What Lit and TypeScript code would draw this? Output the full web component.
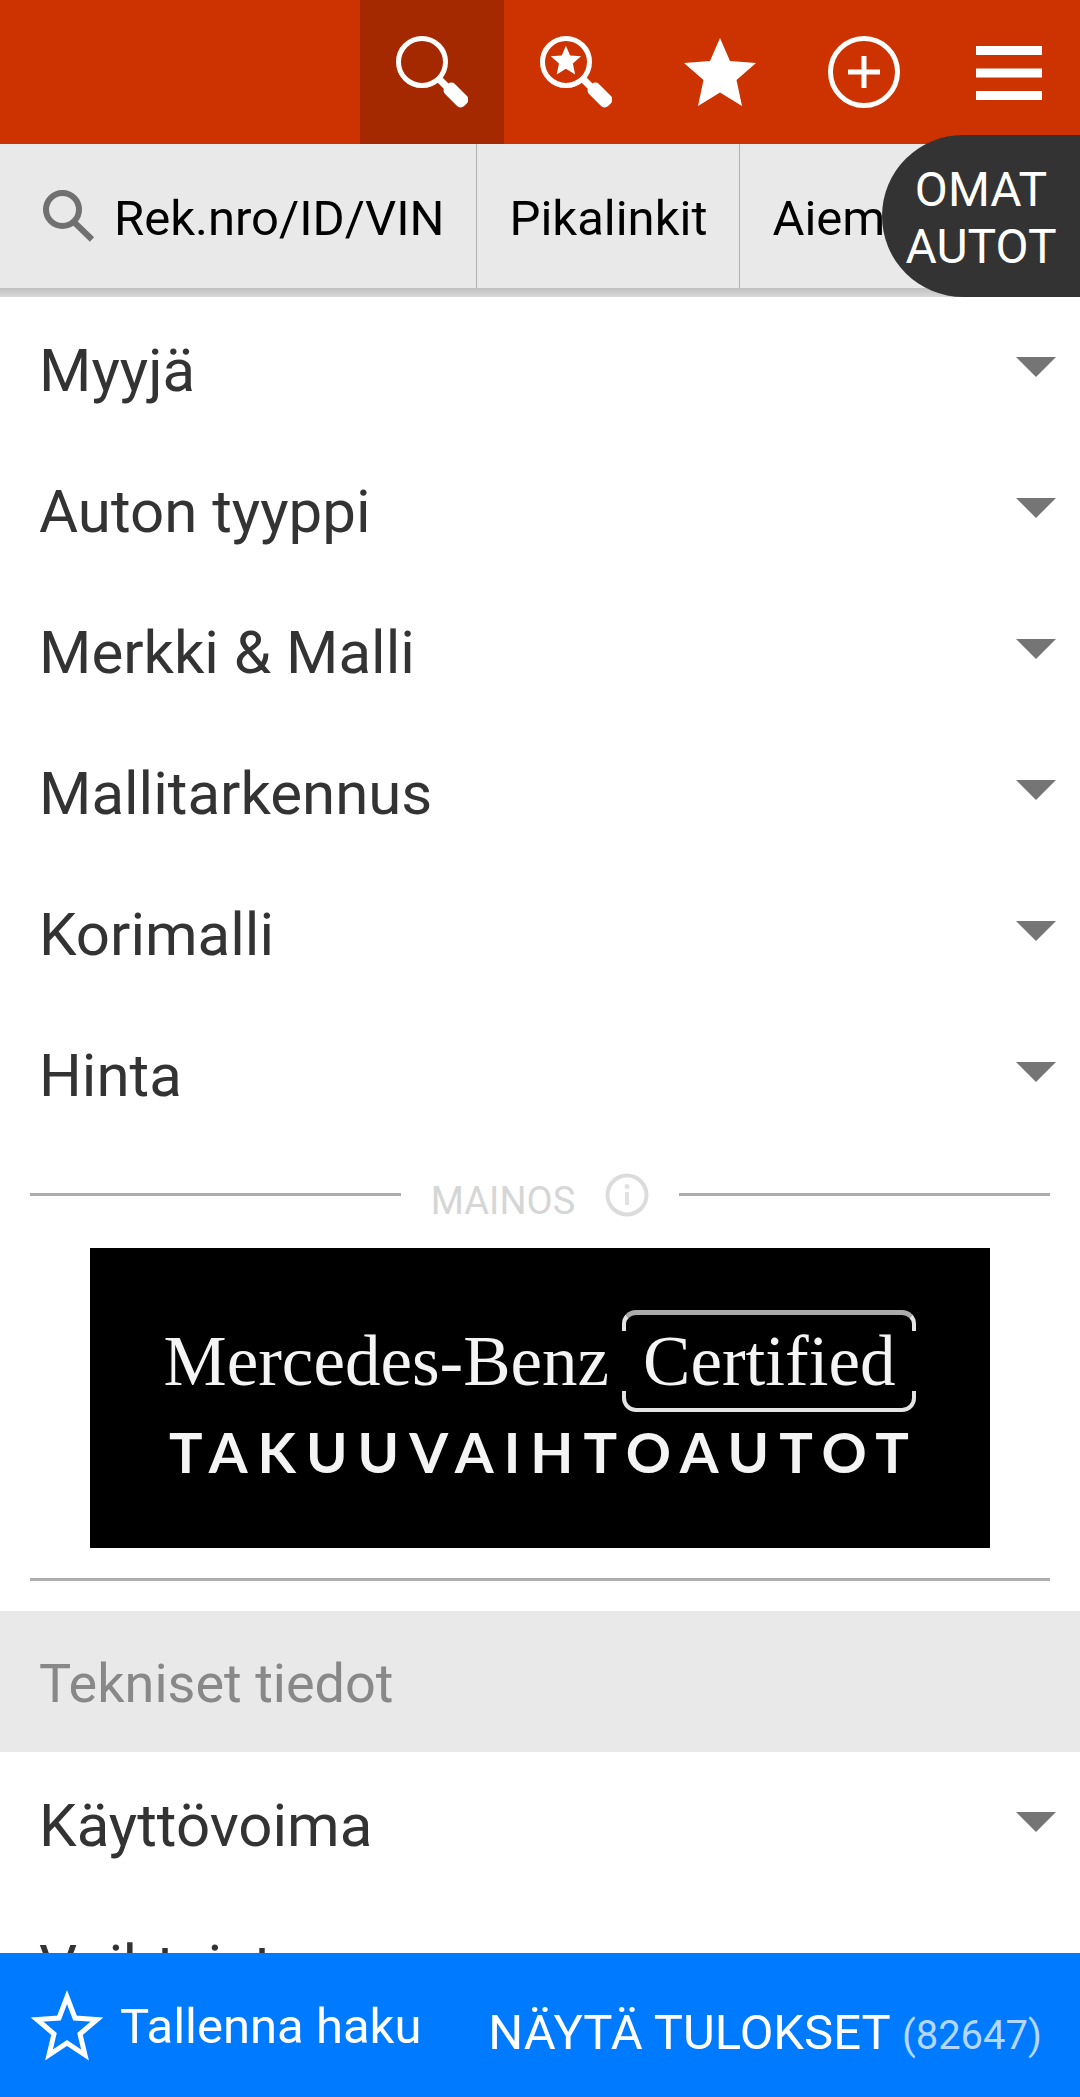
import { LitElement, html, css, svg } from "lit";
import { customElement, property, state } from "lit/decorators.js";

const STAR = "M36 2 L46 25 L72 27 L52.5 44 L58 70 L36 56.5 L14 70 L19.5 44 L0 27 L26 25 Z";

const lens = svg`
  <circle cx="26" cy="26" r="23.5" fill="none" stroke="#fff" stroke-width="5"/>
  <path d="M42 42 L52 52" stroke="#fff" stroke-width="7"/>
  <rect x="46.5" y="52" width="27" height="14" rx="5" fill="#fff" transform="rotate(45 60 59)"/>`;

const icons = {
  search: html`<svg viewBox="0 0 72 72" aria-hidden="true">${lens}</svg>`,
  saved: html`<svg viewBox="0 0 72 72" aria-hidden="true">${lens}
    <path d=${STAR} fill="#fff" transform="translate(10.8 9) scale(0.42)"/></svg>`,
  star: html`<svg viewBox="0 0 72 72" aria-hidden="true"><path d=${STAR} fill="#fff"/></svg>`,
  add: html`<svg viewBox="0 0 72 72" aria-hidden="true">
    <circle cx="36" cy="36" r="33.5" fill="none" stroke="#fff" stroke-width="5"/>
    <path d="M36 20 V52 M20 36 H52" stroke="#fff" stroke-width="5"/></svg>`,
  menu: html`<svg viewBox="0 0 72 72" aria-hidden="true">
    <path d="M4 14.5 H70 M4 37 H70 M4 59.5 H70" stroke="#fff" stroke-width="9"/></svg>`,
};

const NAV = [
  { label: "Haku", icon: icons.search },
  { label: "Tallennetut haut", icon: icons.saved },
  { label: "Suosikit", icon: icons.star },
  { label: "Lisää ilmoitus", icon: icons.add },
  { label: "Valikko", icon: icons.menu },
];

@customElement("filter-row")
export class FilterRow extends LitElement {
  @property() label = "";
  @state() private open = false;

  static styles = css`
    :host { display: block; }
    .row {
      display: flex; align-items: center; justify-content: space-between;
      width: 100%; height: 141px; padding: 0 24px 2px 39px;
      border: 0; background: none; text-align: left; cursor: pointer;
      font: 400 60px/72px Roboto, sans-serif; color: #333;
    }
    .label { padding-top: 8px; }
    .arrow { width: 40px; height: 20px; fill: #757575; }
  `;

  render() {
    return html`<button class="row" aria-expanded=${this.open} @click=${() => (this.open = !this.open)}>
      <span class="label">${this.label}</span>
      <svg class="arrow" viewBox="0 0 40 20" aria-hidden="true"><path d="M0 0 H40 L20 20 Z"/></svg>
    </button>`;
  }
}

@customElement("ad-slot")
export class AdSlot extends LitElement {
  static styles = css`
    :host { display: block; padding: 30px 30px; }
    .head { display: flex; align-items: center; gap: 30px; height: 43px; }
    .line { flex: 1; height: 3px; background: #adadad; }
    .caption { display: flex; align-items: center; gap: 30px; }
    .caption-text { font: 400 38px/42px Roboto, sans-serif; color: #d6d6d6; padding-top: 12px; }
    .info { width: 44px; height: 44px; padding: 0; border: 0; background: none; }
    .info svg { display: block; width: 44px; height: 44px; }
    .banner {
      display: flex; flex-direction: column; align-items: center; justify-content: center;
      aspect-ratio: 3 / 1; margin: 32px 60px 30px; padding-bottom: 4px; box-sizing: border-box;
      background: #000; color: #f4f4f4; text-decoration: none; overflow: hidden;
    }
    .brand { display: flex; align-items: center; gap: 13px; font: 400 71px/60px "Liberation Serif", serif; }
    .certified { display: flex; flex-direction: column; }
    .certified::before, .certified::after {
      content: ""; box-sizing: border-box; height: 21px; border: 4px solid #e4e4e4;
    }
    .certified::before { border-top: 5px solid #ababab; border-bottom: 0; border-radius: 14px 14px 0 0; }
    .certified::after { border-top: 0; border-radius: 0 0 14px 14px; }
    .word { padding: 0 21px; }
    .tagline { font: 700 56px/60px Lato, sans-serif; letter-spacing: 10px; padding: 10px 0 0 8px; }
  `;

  render() {
    return html`
      <div class="head">
        <span class="line"></span>
        <span class="caption">
          <span class="caption-text">MAINOS</span>
          <button class="info" aria-label="Tietoa mainoksesta">
            <svg viewBox="0 0 44 44" aria-hidden="true">
              <circle cx="22" cy="22" r="19.5" fill="none" stroke="#dcdcdc" stroke-width="4"/>
              <path d="M22 19 V32" stroke="#e2e2e2" stroke-width="4"/>
              <circle cx="22" cy="13.5" r="2.5" fill="#e2e2e2"/>
            </svg>
          </button>
        </span>
        <span class="line"></span>
      </div>
      <a class="banner" href="#">
        <span class="brand">
          <span>Mercedes-Benz</span>
          <span class="certified"><span class="word">Certified</span></span>
        </span>
        <span class="tagline">TAKUUVAIHTOAUTOT</span>
      </a>
      <div class="line"></div>
    `;
  }
}

@customElement("app-root")
export class AppRoot extends LitElement {
  @state() private active = 0;

  static styles = css`
    :host {
      display: flex; flex-direction: column; height: 100vh; overflow: hidden;
      background: #fff; font-family: Roboto, sans-serif;
    }
    button { font-family: inherit; border: 0; background: none; padding: 0; cursor: pointer; }
    .nav { display: flex; justify-content: flex-end; flex: none; background: #cc3300; }
    .nav-item { display: flex; align-items: center; justify-content: center; width: 144px; height: 144px; }
    .nav-item.active { background: #a42900; }
    .nav-item svg { width: 72px; height: 72px; }
    .sub { position: relative; flex: none; }
    .tabs { display: flex; height: 144px; background: #e9e9e9; overflow: hidden; }
    .tab {
      display: flex; align-items: center; flex: none; padding: 5px 32px 0; box-sizing: border-box;
      border-right: 1px solid #b0b0b0; color: #000; text-decoration: none;
      font-size: 49px; line-height: 58px; white-space: nowrap;
    }
    .tab.lookup { padding-left: 42px; gap: 18px; }
    .tab svg { width: 54px; height: 54px; margin-bottom: 5px; }
    .shade { height: 9px; background: linear-gradient(#c0c0c0, #d8d8d8); }
    .own {
      position: absolute; right: 0; bottom: 0; width: 198px; height: 162px;
      border-radius: 81px 0 0 81px; background: #333; color: #fff; padding-top: 3px;
      font-size: 48px; line-height: 57px; text-align: center;
    }
    .content { flex: 1; min-height: 0; overflow-y: auto; scrollbar-width: none; }
    .section {
      display: flex; align-items: center; height: 141px; margin: 0; padding: 5px 39px 0; box-sizing: border-box;
      background: #e9e9e9; color: #888; font-size: 54px; line-height: 64px; font-weight: 400;
    }
    .bar {
      display: flex; align-items: center; justify-content: space-between; flex: none;
      height: 144px; padding: 0 38px 0 30px; background: #007aff;
    }
    .bar button { color: #fff; font-size: 49px; line-height: 58px; white-space: nowrap; }
    .save { display: flex; align-items: center; gap: 16px; }
    .save svg { width: 74px; height: 74px; }
    .save span { padding-top: 4px; }
    .results { padding-top: 18px; }
    .count { font-size: 40px; color: #b3d7ff; }
  `;

  private rows(labels: string[]) {
    return labels.map((label) => html`<filter-row label=${label}></filter-row>`);
  }

  render() {
    return html`
      <nav class="nav">
        ${NAV.map(
          (item, i) => html`<button
            class=${i === this.active ? "nav-item active" : "nav-item"}
            aria-label=${item.label}
            @click=${() => (this.active = i)}
          >${item.icon}</button>`
        )}
      </nav>
      <div class="sub">
        <div class="tabs">
          <a class="tab lookup" href="#">
            <svg viewBox="0 0 54 54" aria-hidden="true" fill="none" stroke="#707070" stroke-width="6">
              <circle cx="20.5" cy="20.5" r="16.5"/><path d="M33 34 L50 50.5"/>
            </svg>
            Rek.nro/ID/VIN
          </a>
          <a class="tab" href="#">Pikalinkit</a>
          <a class="tab" href="#">Aiemmat haut</a>
        </div>
        <div class="shade"></div>
        <button class="own">OMAT<br />AUTOT</button>
      </div>
      <main class="content">
        ${this.rows(["Myyjä", "Auton tyyppi", "Merkki & Malli", "Mallitarkennus", "Korimalli", "Hinta"])}
        <ad-slot></ad-slot>
        <h2 class="section">Tekniset tiedot</h2>
        ${this.rows(["Käyttövoima", "Vaihteisto"])}
      </main>
      <footer class="bar">
        <button class="save">
          <svg viewBox="-1 -1 74 74" aria-hidden="true">
            <path d="M36 8 L44 29 L66 30.5 L49 45 L54 66 L36 54 L18 66 L23 45 L6 30.5 L28 29 Z"
              fill="none" stroke="#fff" stroke-width="5"/>
          </svg>
          <span>Tallenna haku</span>
        </button>
        <button class="results">NÄYTÄ TULOKSET <span class="count">(82647)</span></button>
      </footer>
    `;
  }
}
